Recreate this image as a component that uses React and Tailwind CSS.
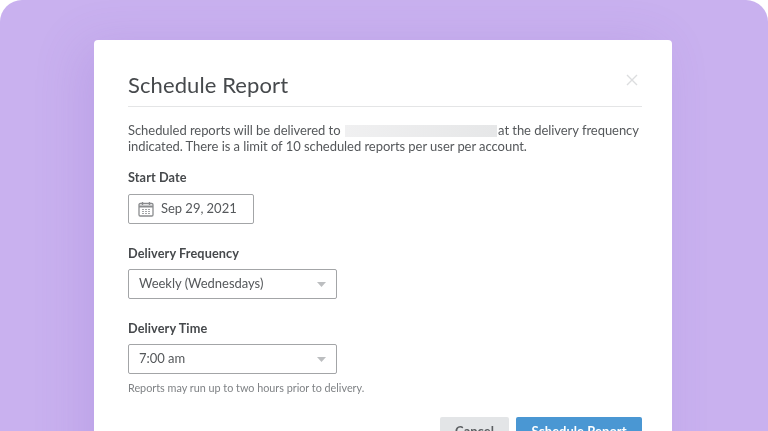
export default function App() {
  const Chevron = () => (
    <svg width="9" height="5" viewBox="0 0 9 5" className="shrink-0"><path d="M0 0h9L4.5 5z" fill="#bcbec0" /></svg>
  );
  const selectCls = "flex h-[30px] w-[209px] items-center justify-between rounded-[2px] border border-[#a3a5a7] pl-[10px] pr-[10px] text-[13px] tracking-[-0.03px] text-[#55585b]";
  const labelCls = "text-[12.7px] leading-[18px] tracking-[0.1px] font-bold text-[#46494c]";
  return (
    <div className="h-[431px] w-[768px] overflow-hidden bg-white font-['Lato','Liberation_Sans',sans-serif]">
      <div className="h-[431px] overflow-hidden rounded-t-[22px] bg-[#c9b1ef] pl-[94px] pt-10 blur-[0.35px]">
        <div className="h-[500px] w-[578px] rounded-[4px] bg-white pl-[34px] pr-[30px] pt-[30px] shadow-[-12px_6px_50px_rgba(120,80,190,0.16)]">
          <div className="flex h-[37px] items-start justify-between border-b border-[#e4e5e6]">
            <h1 className="text-[22px] leading-[30px] tracking-[0.1px] text-[#46494c]">Schedule Report</h1>
            <svg width="12" height="12" viewBox="0 0 12 12" className="mr-[4px] mt-[4px]" fill="none" stroke="#dcdddf" strokeWidth="1.4"><path d="M1 1l10 10M11 1L1 11" /></svg>
          </div>
          <p className="mt-[15px] whitespace-nowrap text-[13px] leading-[16px] tracking-[-0.05px] text-[#55585b]">
            Scheduled reports will be delivered to{" "}
            <span className="ml-[1px] mr-[-2px] inline-block h-[12px] w-[152px] translate-y-[2px] bg-gradient-to-r from-[#f0f0f1] to-[#e6e7e8]"></span>{" "}
            at the delivery frequency<br />indicated. There is a limit of 10 scheduled reports per user per account.
          </p>
          <div className={`mt-[14px] ${labelCls}`}>Start Date</div>
          <div className="mt-[8px] flex h-[30px] w-[126px] items-center gap-[7px] rounded-[2px] border border-[#a3a5a7] pl-[9px] text-[13px] tracking-[-0.03px] text-[#55585b]">
            <svg width="16" height="16" viewBox="0 0 16 16" fill="none" className="shrink-0">
              <rect x="1" y="2.5" width="14" height="12.5" rx="1.2" stroke="#8a8c8e" strokeWidth="1.3" />
              <path d="M1 5.5h14" stroke="#8a8c8e" strokeWidth="2" />
              <path d="M4.5 1v3M11.5 1v3" stroke="#8a8c8e" strokeWidth="1.4" />
              <path d="M4 8.5h8M4 10.5h8M4 12.5h8" stroke="#a3a5a7" strokeWidth="1.1" strokeDasharray="2 1" />
            </svg>
            <span>Sep 29, 2021</span>
          </div>
          <div className={`mt-[20px] ${labelCls}`}>Delivery Frequency</div>
          <div className={`mt-[7px] ${selectCls}`}><span>Weekly (Wednesdays)</span><Chevron /></div>
          <div className={`mt-[20px] ${labelCls}`}>Delivery Time</div>
          <div className={`mt-[7px] ${selectCls}`}><span>7:00 am</span><Chevron /></div>
          <p className="mt-[6px] text-[10.8px] leading-[16px] text-[#7f8285]">Reports may run up to two hours prior to delivery.</p>
          <div className="mt-[21px] flex justify-end gap-[7px] text-[13px] font-bold">
            <div className="flex h-[30px] w-[69px] items-center justify-center rounded-[2px] bg-[#e3e5e7] text-[#5c5f62]">Cancel</div>
            <div className="flex h-[30px] w-[126px] items-center justify-center rounded-[2px] bg-[#4a97d3] text-white">Schedule Report</div>
          </div>
        </div>
      </div>
    </div>
  );
}
